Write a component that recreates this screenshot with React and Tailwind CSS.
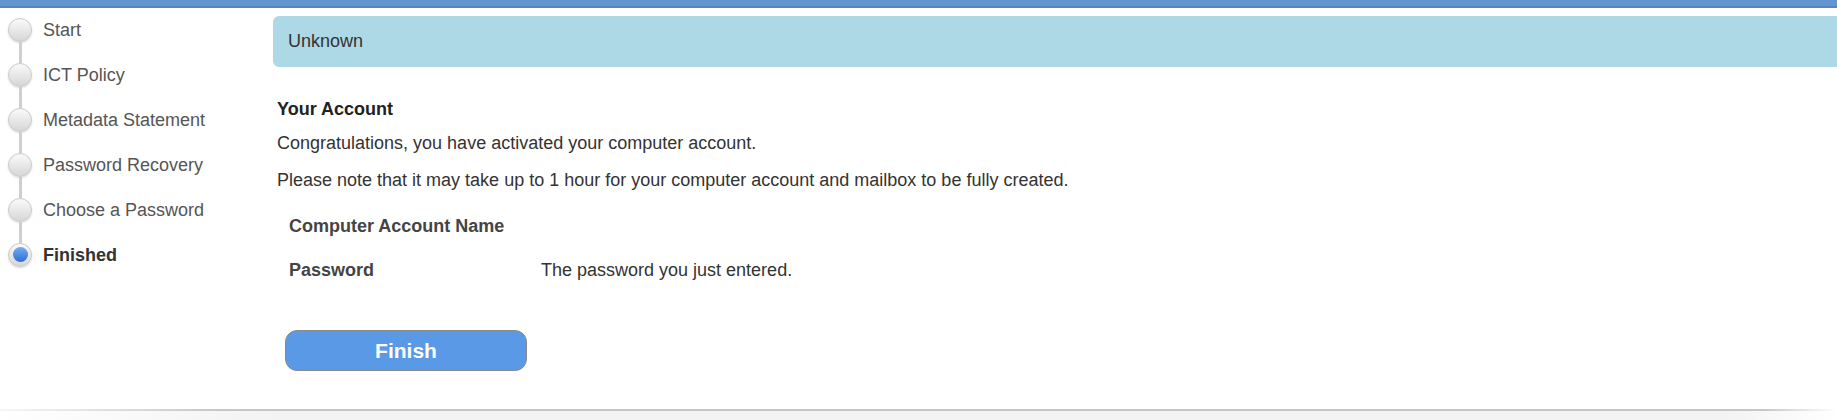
import React from 'react';

const steps = [
  { label: 'Start' },
  { label: 'ICT Policy' },
  { label: 'Metadata Statement' },
  { label: 'Password Recovery' },
  { label: 'Choose a Password' },
  { label: 'Finished', active: true },
];

const StepDot = ({ active }) => (
  <div className="w-[24px] h-[24px] rounded-full border border-[#c9c9c9] bg-gradient-to-b from-[#fafafa] to-[#d6d6d6] shadow-[0_1px_2px_rgba(0,0,0,0.15)] flex items-center justify-center shrink-0">
    {active && (
      <div className="w-[15px] h-[15px] rounded-full bg-gradient-to-b from-[#74acf2] to-[#2c6fd2]" />
    )}
  </div>
);

const Stepper = () => (
  <div className="w-[273px] shrink-0 pl-[8px] -mt-[1px]">
    {steps.map((step, i) => (
      <div key={step.label} className="flex items-stretch h-[45px]">
        <div className="w-[24px] flex flex-col items-center">
          <div className={`flex-1 w-[3px] ${i === 0 ? 'bg-transparent' : 'bg-[#cfcfcf]'}`} />
          <StepDot active={step.active} />
          <div className={`flex-1 w-[3px] ${i === steps.length - 1 ? 'bg-transparent' : 'bg-[#cfcfcf]'}`} />
        </div>
        <div
          className={`ml-[11px] flex items-center text-[18px] leading-[26px] ${
            step.active ? 'font-bold text-[#333]' : 'text-[#555]'
          }`}
        >
          {step.label}
        </div>
      </div>
    ))}
  </div>
);

const App = () => {
  return (
    <div className="w-full h-[420px] overflow-hidden bg-white flex flex-col font-['Liberation_Sans',Arial,sans-serif]">
      <div className="h-[8px] shrink-0 bg-[#6395d1] border-b-2 border-[#5484c2]" />

      <div className="flex flex-1 min-h-0">
        <Stepper />

        <div className="flex-1 min-w-0">
          <div className="mt-[8px] -mr-[20px] h-[51px] rounded-l-[6px] bg-[#add8e6] pl-[15px] flex items-center text-[18px] text-[#333]">
            Unknown
          </div>

          <div className="pl-[4px] text-[18px] leading-[26px] text-[#333]">
            <h3 className="mt-[29px] font-bold text-[#222]">Your Account</h3>
            <p className="mt-[8px]">Congratulations, you have activated your computer account.</p>
            <p className="mt-[11px]">
              Please note that it may take up to 1 hour for your computer account and mailbox to be fully created.
            </p>
          </div>

          <div className="mt-[10px] pl-[16px] text-[18px] leading-[26px]">
            <div className="flex items-center h-[45px]">
              <div className="w-[252px] font-bold text-[#444]">Computer Account Name</div>
              <div className="text-[#333]"></div>
            </div>
            <div className="flex items-center h-[44px]">
              <div className="w-[252px] font-bold text-[#444]">Password</div>
              <div className="text-[#333]">The password you just entered.</div>
            </div>
          </div>

          <div className="pl-[12px] mt-[38px]">
            <button className="w-[242px] h-[41px] rounded-[12px] border border-[#8a8a8a] bg-[#5999e5] text-white font-bold text-[21px] leading-none">
              Finish
            </button>
          </div>
        </div>
      </div>

      <div className="h-[11px] shrink-0 flex flex-col">
        <div className="h-[2px] bg-[linear-gradient(to_right,#f6f6f6,#c6c6c6_12%,#c6c6c6_96%,#ffffff)]" />
        <div className="flex-1 bg-[linear-gradient(to_right,#ffffff,#f3f3f3_15%,#f3f3f3_94%,#ffffff)]" />
      </div>
    </div>
  );
};

export default App;
